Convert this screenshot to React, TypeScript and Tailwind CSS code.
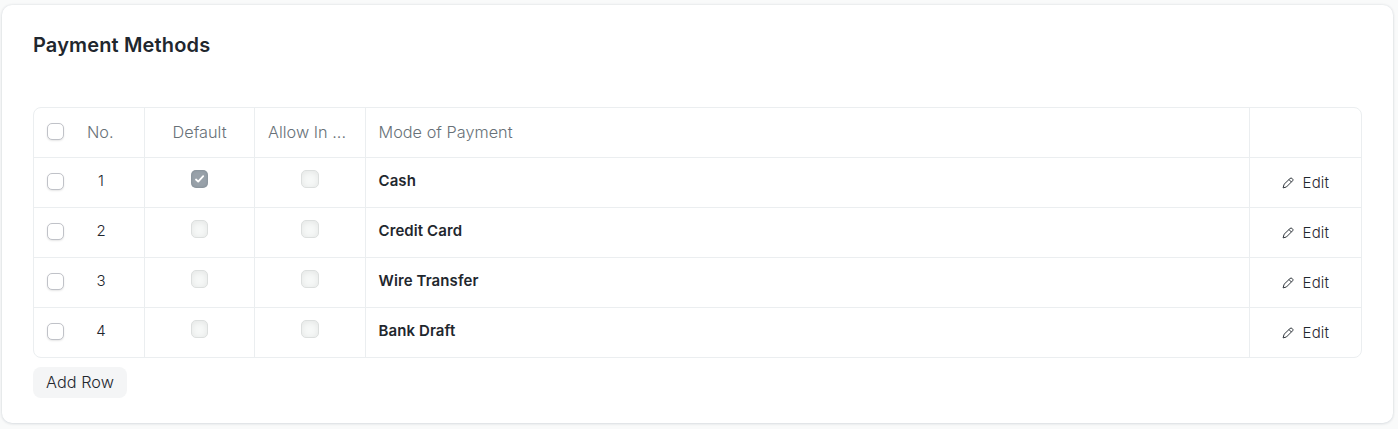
const rows = [
  { name: 'Cash', isDefault: true },
  { name: 'Credit Card', isDefault: false },
  { name: 'Wire Transfer', isDefault: false },
  { name: 'Bank Draft', isDefault: false },
];

const GRID = 'grid grid-cols-[110px_110px_111px_884px_112px]';

function Check() {
  return (
    <span className="block h-[17px] w-[17px] shrink-0 rounded-[5px] border border-[#c0c2c8] bg-white shadow-[0_1px_2px_rgba(0,0,0,0.1)]" />
  );
}

function DisabledCheck({ checked = false, wide = false }: { checked?: boolean; wide?: boolean }) {
  if (checked) {
    return (
      <span className="flex h-[18px] w-[17px] items-center justify-center rounded-[5px] bg-[#98a1a9] shadow-[inset_0_0_3px_rgba(70,85,95,0.35)]">
        <svg width="10" height="8" viewBox="0 0 10 8" fill="none" stroke="white" strokeWidth="1.8" strokeLinecap="round" strokeLinejoin="round">
          <path d="M1 4.5 3.2 6.6 8.2 1.1" />
        </svg>
      </span>
    );
  }
  return (
    <span
      className={`block h-[18px] rounded-[5px] border border-[#dcdfde] bg-[#f6f8f7] shadow-[inset_0_1px_6px_rgba(0,0,0,0.08)] ${wide ? 'w-[18px]' : 'w-[17px]'}`}
    />
  );
}

function Pencil() {
  return (
    <svg width="12" height="12" viewBox="0 0 12 12" fill="none" stroke="#30363c" strokeWidth="1" strokeLinejoin="round" strokeLinecap="round">
      <path d="M8.3 1.3a1.2 1.2 0 0 1 1.6 0l0.8 0.8a1.2 1.2 0 0 1 0 1.6L4.4 10 1.1 10.9 2 7.6z" />
      <path d="M7.2 2.8 9.2 4.8" />
    </svg>
  );
}

export default function App() {
  return (
    <div className="h-[429px] w-[1398px] overflow-hidden bg-[#f9fafa] pl-[2px] pt-[5px] font-['Inter',sans-serif] text-[#1f272e]">
      <section className="h-[418px] w-[1391px] rounded-[10px] bg-white pl-[31px] pt-[26px] shadow-[0_0_3px_rgba(17,43,66,0.12),0_1px_3px_rgba(17,43,66,0.08)]">
        <h2 className="h-[76px] text-[20px] font-semibold leading-[28px] tracking-[0.15px]">Payment Methods</h2>
        <div className="w-[1329px] overflow-hidden rounded-[8px] border border-[#ebeef0]">
          <div className={`${GRID} h-[49px] text-[16.25px] font-[350] leading-[24px] tracking-[0.02px] text-[#687178]`}>
            <div className="flex pl-[13px] pt-[12px]">
              <div className="pt-[3px]"><Check /></div>
              <span className="ml-[23px]">No.</span>
            </div>
            <div className="border-l border-[#ebeef0] pt-[12px] text-center">Default</div>
            <div className="border-l border-[#ebeef0] pl-[13px] pt-[12px]">Allow In ...</div>
            <div className="border-l border-[#ebeef0] pl-[12.5px] pt-[12px]">Mode of Payment</div>
            <div className="border-l border-[#ebeef0]" />
          </div>
          {rows.map((row, i) => (
            <div key={row.name} className={`${GRID} h-[50px] border-t border-[#ebeef0] text-[15px] leading-[22px]`}>
              <div className="flex pl-[13px]">
                <div className="pt-[15px]"><Check /></div>
                <span className="ml-[23px] w-[28px] pt-[12px] text-center font-[350]">{i + 1}</span>
              </div>
              <div className="flex justify-center border-l border-[#ebeef0] pt-[12px]">
                <DisabledCheck checked={row.isDefault} />
              </div>
              <div className="flex justify-center border-l border-[#ebeef0] pt-[12px]">
                <DisabledCheck wide />
              </div>
              <div className="border-l border-[#ebeef0] pl-[12.5px] pt-[12px] font-semibold tracking-[0.1px]">{row.name}</div>
              <div className="flex items-center border-l border-[#ebeef0] pl-[32px] font-[350] tracking-[0.2px]">
                <Pencil />
                <span className="ml-[8.5px]">Edit</span>
              </div>
            </div>
          ))}
        </div>
        <button className="mt-[9px] h-[31px] w-[94px] rounded-[8px] bg-[#f4f5f6] text-[16.25px] font-[350] tracking-[0.02px]">Add Row</button>
      </section>
    </div>
  );
}
